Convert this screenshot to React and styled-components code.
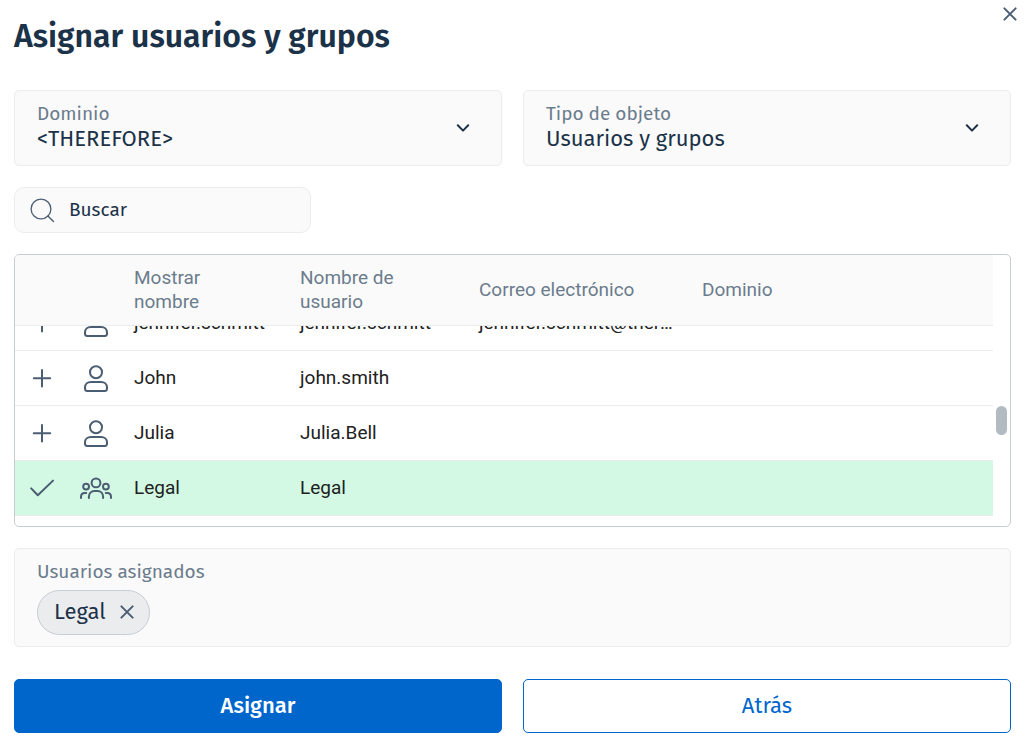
import React, { useLayoutEffect, useRef, useState } from 'react'
import styled, { createGlobalStyle } from 'styled-components'

const colors = {
  text: '#1b3249',
  label: '#6b7c8d',
  icon: '#4b5d73',
  surface: '#fafafa',
  line: '#ebecec',
  frame: '#c8cdd3',
  selected: '#d3f8e3',
  accent: '#0066cc',
}

const entries = [
  { id: 1, name: 'jennifer.schmitt', user: 'jennifer.schmitt', email: 'jennifer.schmitt@therefore.net' },
  { id: 2, name: 'John', user: 'john.smith' },
  { id: 3, name: 'Julia', user: 'Julia.Bell' },
  { id: 4, name: 'Legal', user: 'Legal', group: true },
]

const App = () => {
  const [assigned, setAssigned] = useState([4])
  const scroller = useRef(null)

  useLayoutEffect(() => {
    scroller.current.scrollTop = scroller.current.scrollHeight
  }, [])

  const toggle = id =>
    setAssigned(assigned.includes(id) ? assigned.filter(a => a !== id) : [...assigned, id])

  return (
    <Dialog>
      <GlobalStyle />
      <Header>
        <Title>Asignar usuarios y grupos</Title>
        <CloseButton type="button" aria-label="Cerrar"><CrossIcon /></CloseButton>
      </Header>

      <Columns>
        <SelectField id="domain" label="Dominio" value="<THEREFORE>" />
        <SelectField id="type" label="Tipo de objeto" value="Usuarios y grupos" />
      </Columns>

      <Search>
        <SearchIcon />
        <SearchInput type="text" placeholder="Buscar" aria-label="Buscar" />
      </Search>

      <TableFrame>
        <Scroller ref={scroller}>
          <Table>
            <colgroup>
              <Col $width={54} />
              <Col $width={54} />
              <Col $width={166} />
              <Col $width={179} />
              <Col $width={223} />
              <col />
            </colgroup>
            <thead>
              <tr>
                <Th />
                <Th />
                <Th>Mostrar nombre</Th>
                <Th>Nombre de usuario</Th>
                <Th>Correo electrónico</Th>
                <Th>Dominio</Th>
              </tr>
            </thead>
            <tbody>
              {entries.map(entry =>
                <EntryRow
                  key={entry.id}
                  entry={entry}
                  selected={assigned.includes(entry.id)}
                  onToggle={() => toggle(entry.id)}
                />)}
            </tbody>
          </Table>
        </Scroller>
        <Track><Thumb /></Track>
      </TableFrame>

      <Assigned>
        <Label as="h2">Usuarios asignados</Label>
        <Chips>
          {entries.filter(e => assigned.includes(e.id)).map(e =>
            <Chip key={e.id}>
              {e.name}
              <IconButton type="button" aria-label="Quitar" onClick={() => toggle(e.id)}><CrossIcon /></IconButton>
            </Chip>)}
        </Chips>
      </Assigned>

      <Columns>
        <Button type="button" $primary>Asignar</Button>
        <Button type="button">Atrás</Button>
      </Columns>
    </Dialog>
  )
}

export default App

const SelectField = ({ id, label, value }) =>
  <Field>
    <Label htmlFor={id}>{label}</Label>
    <Select id={id} defaultValue={value}>
      <option>{value}</option>
    </Select>
    <Chevron viewBox="0 0 14 8" aria-hidden="true">
      <path d="M1.8 1.3 7 6.6l5.2-5.3" />
    </Chevron>
  </Field>

const EntryRow = ({ entry, selected, onToggle }) =>
  <Row $selected={selected}>
    <IconCell>
      <IconButton type="button" aria-label="Asignar" aria-pressed={selected} onClick={onToggle}>
        {selected ? <CheckIcon /> : <PlusIcon />}
      </IconButton>
    </IconCell>
    <IconCell>{entry.group ? <GroupIcon /> : <UserIcon />}</IconCell>
    <Td>{entry.name}</Td>
    <Td>{entry.user}</Td>
    <Td>{entry.email}</Td>
    <Td />
  </Row>

const CrossIcon = () =>
  <Icon width="14" height="14" viewBox="0 0 14 14">
    <path d="M1.4 1.4l11.2 11.2M12.6 1.4 1.4 12.6" />
  </Icon>

const SearchIcon = () =>
  <Icon width="26" height="26" viewBox="0 0 26 26">
    <circle cx="12" cy="12" r="9.9" strokeWidth="1.3" />
    <path d="M18.9 18.9l5.6 5.6" strokeWidth="1.4" />
  </Icon>

const PlusIcon = () =>
  <Icon width="24" height="24" viewBox="0 0 24 24">
    <path d="M12 4v16.4M3.8 12.2h16.4" />
  </Icon>

const CheckIcon = () =>
  <Icon width="24" height="24" viewBox="0 0 24 24">
    <path d="M1.2 12.4l6.6 6.8L23 4.6" />
  </Icon>

const UserIcon = () =>
  <Icon width="24" height="28" viewBox="0 0 24 28">
    <circle cx="12" cy="8.2" r="6" />
    <path d="M7 18h10c3.600 0 6 2.300 6 5.400v1.400c0 1.300-.8 2.100-2.100 2.100H3.100C1.800 26.900 1 26.100 1 24.800v-1.400C1 20.300 3.400 18 7 18z" />
  </Icon>

const GroupIcon = () =>
  <Icon width="32" height="22" viewBox="0 0 32 22">
    <circle cx="16" cy="5.9" r="4.4" />
    <circle cx="6.1" cy="9.6" r="2.9" />
    <circle cx="25.9" cy="9.6" r="2.9" />
    <path d="M8.9 21v-1.200c0-3.400 2.300-5.800 5.600-5.800h3c3.300 0 5.600 2.400 5.600 5.800V21" />
    <path d="M1 21v-1.200c0-2.300 1.500-3.900 3.800-3.900h1.400M31 21v-1.200c0-2.300-1.500-3.900-3.800-3.900h-1.400" />
  </Icon>

const GlobalStyle = createGlobalStyle`
  * {
    box-sizing: border-box;
  }
  body {
    margin: 0;
    background: #fff;
    color: ${colors.text};
    font-family: 'Fira Sans', 'Noto Sans', sans-serif;
  }
  button, input, select {
    font-family: inherit;
  }
`
const Dialog = styled.main`
  display: flex;
  flex-direction: column;
  gap: 21px;
  padding: 0 16px 11px 14px;
`
const Header = styled.header`
  display: flex;
  justify-content: space-between;
  align-items: flex-start;
  height: 69px;
  padding-top: 7px;
`
const Title = styled.h1`
  margin: 0;
  padding-top: 5px;
  font-size: 32px;
  line-height: 48px;
  font-weight: 600;
`
const CloseButton = styled.button`
  display: flex;
  margin-right: -6px;
  padding: 0;
  border: 0;
  background: none;
  cursor: pointer;
`
const Columns = styled.div`
  display: grid;
  grid-template-columns: 1fr 1fr;
  gap: 21px;

  &:last-child {
    margin-top: 11px;
  }
`
const Field = styled.div`
  position: relative;
  display: flex;
  flex-direction: column;
  height: 76px;
  padding: 11px 22px;
  border: 1px solid ${colors.line};
  border-radius: 5px;
  background: ${colors.surface};
`
const Label = styled.label`
  margin: 0;
  color: ${colors.label};
  font-size: 19px;
  line-height: 24px;
  font-weight: 400;
`
const Select = styled.select`
  appearance: none;
  height: 26px;
  padding: 0;
  border: 0;
  background: none;
  color: ${colors.text};
  font-size: 22px;
  line-height: 26px;
`
const Chevron = styled.svg`
  position: absolute;
  top: 33px;
  right: 31px;
  width: 14px;
  height: 8px;
  fill: none;
  stroke: ${colors.text};
  stroke-width: 2;
  stroke-linecap: round;
  stroke-linejoin: round;
  pointer-events: none;
`
const Search = styled.label`
  display: flex;
  align-items: center;
  gap: 14px;
  width: 297px;
  height: 46px;
  padding: 0 14px;
  border: 1px solid ${colors.line};
  border-radius: 10px;
  background: ${colors.surface};
`
const SearchInput = styled.input`
  flex: 1;
  min-width: 0;
  padding: 0;
  border: 0;
  outline: 0;
  background: none;
  color: ${colors.text};
  font-size: 19px;
  line-height: 24px;

  &::placeholder {
    color: ${colors.text};
    opacity: 1;
  }
`
const TableFrame = styled.section`
  display: flex;
  height: 273px;
  border: 1px solid ${colors.frame};
  border-radius: 5px;
  overflow: hidden;
`
const Scroller = styled.div`
  flex: 1;
  min-width: 0;
  padding-bottom: 10px;
  overflow-y: auto;
  scrollbar-width: none;
`
const Table = styled.table`
  width: 100%;
  table-layout: fixed;
  border-collapse: separate;
  border-spacing: 0;
  font-family: Roboto, sans-serif;
  font-size: 19px;
  line-height: 24px;
`
const Col = styled.col`
  width: ${({ $width }) => $width}px;
`
const Th = styled.th`
  position: sticky;
  top: 0;
  z-index: 1;
  height: 71px;
  padding: 0 32px 0 11px;
  border-bottom: 1px solid ${colors.line};
  background: ${colors.surface};
  color: ${colors.label};
  font-weight: 400;
  text-align: left;
`
const Row = styled.tr`
  background: ${({ $selected }) => $selected ? colors.selected : '#fff'};
`
const Td = styled.td`
  height: 55px;
  padding: 0 16px 0 11px;
  border-bottom: 1px solid ${colors.line};
  color: #212121;
  overflow: hidden;
  text-overflow: ellipsis;
  white-space: nowrap;
`
const IconCell = styled(Td)`
  padding: 0;

  > * {
    margin: 0 auto;
  }
`
const IconButton = styled.button`
  display: flex;
  padding: 0;
  border: 0;
  background: none;
  cursor: pointer;
`
const Icon = styled.svg`
  display: block;
  flex-shrink: 0;
  fill: none;
  stroke: ${colors.icon};
  stroke-width: 2;
  stroke-linecap: round;
  stroke-linejoin: round;
`
const Track = styled.div`
  width: 17px;
  padding: 151px 4px 0 3px;
`
const Thumb = styled.div`
  width: 11px;
  height: 29px;
  border-radius: 6px;
  background: #b2bac2;
`
const Assigned = styled.section`
  height: 99px;
  padding: 11px 22px;
  border: 1px solid ${colors.line};
  border-radius: 5px;
  background: ${colors.surface};
`
const Chips = styled.div`
  display: flex;
  gap: 8px;
  padding-top: 6px;
`
const Chip = styled.span`
  display: flex;
  align-items: center;
  gap: 14px;
  height: 45px;
  padding: 0 15px 1px 16px;
  border: 1px solid ${colors.frame};
  border-radius: 23px;
  background: #ebecee;
  font-size: 22px;
  line-height: 26px;
`
const Button = styled.button`
  height: 54px;
  border: 1px solid ${colors.accent};
  border-radius: 5px;
  background: ${({ $primary }) => $primary ? colors.accent : '#fff'};
  color: ${({ $primary }) => $primary ? '#fff' : colors.accent};
  font-size: 22px;
  line-height: 26px;
  font-weight: ${({ $primary }) => $primary ? 500 : 400};
  cursor: pointer;
`
